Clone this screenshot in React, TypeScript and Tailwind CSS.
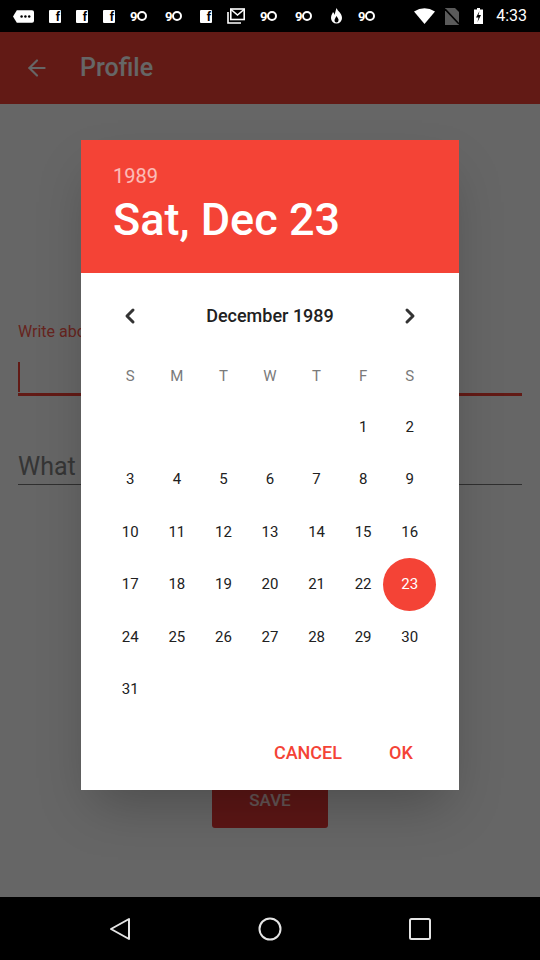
import React from "react";
import { ArrowLeft, ChevronLeft, ChevronRight } from "lucide-react";

const days: (number | null)[] = [
  null, null, null, null, null, 1, 2,
  3, 4, 5, 6, 7, 8, 9,
  10, 11, 12, 13, 14, 15, 16,
  17, 18, 19, 20, 21, 22, 23,
  24, 25, 26, 27, 28, 29, 30,
  31, null, null, null, null, null, null,
];

const weekDays = ["S", "M", "T", "W", "T", "F", "S"];

function FbIcon() {
  return (
    <div className="w-[12px] h-[13px] bg-white rounded-[1px] flex items-end justify-end pr-[1px] text-black text-[12px] font-bold leading-none">
      f
    </div>
  );
}

function NinetyIcon() {
  return (
    <div className="w-[20px] flex items-center text-white text-[13px] font-bold leading-none tracking-[-1px]">
      9<span className="ml-[1px] inline-block w-[10px] h-[10px] rounded-full border-[2px] border-white" />
    </div>
  );
}

function StatusBar() {
  return (
    <div className="h-[32px] bg-black flex items-center justify-between pl-[13px] pr-[13px]">
      <div className="flex items-center gap-[15px]">
        <svg width="21" height="13" viewBox="0 0 22 13">
          <path d="M4 0 H20 a2 2 0 0 1 2 2 V11 a2 2 0 0 1 -2 2 H4 L0 6.5 Z" fill="white" />
          <circle cx="9" cy="6.5" r="1.3" fill="black" />
          <circle cx="13" cy="6.5" r="1.3" fill="black" />
          <circle cx="17" cy="6.5" r="1.3" fill="black" />
        </svg>
        <FbIcon />
        <FbIcon />
        <FbIcon />
        <NinetyIcon />
        <NinetyIcon />
        <FbIcon />
        <svg width="18" height="16" viewBox="0 0 18 16" fill="none" stroke="white" strokeWidth="1.6">
          <path d="M1 4 V15 H14" />
          <rect x="3.8" y="1" width="13.4" height="10.5" />
          <path d="M4 1.5 L10.5 7 L17 1.5" />
        </svg>
        <NinetyIcon />
        <NinetyIcon />
        <svg width="13" height="16" viewBox="0 0 13 16">
          <path d="M6.5 0 C7.5 3 12 5 12 10 A5.5 5.5 0 0 1 1 10 C1 7 2.5 5.5 3 4 C4 5 4.5 6 4.8 7 C5 4 6 2 6.5 0Z" fill="white" />
          <path d="M6.5 8 C7.5 10 9 11 8.5 12.5 A2 2 0 0 1 4.5 12.5 C4.5 11 5.5 10 6.5 8Z" fill="black" />
        </svg>
        <NinetyIcon />
      </div>
      <div className="flex items-center">
        <svg width="21" height="16" viewBox="0 0 21 16">
          <path d="M0 3.5 Q10.5 -3 21 3.5 L10.5 16 Z" fill="white" />
        </svg>
        <svg className="ml-[10px]" width="14" height="17" viewBox="0 0 14 17">
          <path d="M0 0 H10 L14 4 V17 H0 Z" fill="#5a5a5a" />
          <path d="M0 1 L14 16" stroke="black" strokeWidth="1.6" />
        </svg>
        <svg className="ml-[15px]" width="9" height="16" viewBox="0 0 9 16">
          <path d="M3 0 H6 V1.5 H9 V16 H0 V1.5 H3 Z" fill="white" />
          <path d="M5.5 3 L2 9.5 H4.5 L3.5 14 L7 7 H4.5 Z" fill="black" />
        </svg>
        <span className="ml-[13px] text-white text-[16px] leading-none" style={{ fontFamily: "Roboto, sans-serif" }}>
          4:33
        </span>
      </div>
    </div>
  );
}

function NavBar() {
  return (
    <div className="h-[63px] bg-black flex items-center justify-center gap-[127px]">
      <svg width="22" height="24" viewBox="0 0 22 24" fill="none" stroke="#e5e5e5" strokeWidth="2" strokeLinejoin="round">
        <path d="M20 2 V22 L2 12 Z" />
      </svg>
      <svg width="24" height="24" viewBox="0 0 24 24" fill="none" stroke="#e5e5e5" strokeWidth="2">
        <circle cx="12" cy="12" r="10.5" />
      </svg>
      <svg width="22" height="22" viewBox="0 0 22 22" fill="none" stroke="#e5e5e5" strokeWidth="2">
        <rect x="1" y="1" width="20" height="20" rx="1.5" />
      </svg>
    </div>
  );
}

function DatePicker() {
  return (
    <div className="w-[378px] h-[650px] bg-white shadow-2xl flex flex-col">
      <div className="h-[133px] bg-[#f44336] pl-[32px] pt-[24px]">
        <div className="text-[20px] leading-[24px] text-white/65">1989</div>
        <div className="mt-[6px] text-[45px] leading-[52px] font-medium text-white">Sat, Dec 23</div>
      </div>
      <div className="flex-1 flex flex-col px-[26px] pt-[19px]">
        <div className="h-[48px] flex items-center justify-between">
          <div className="w-[46.5px] flex justify-center text-[#333]">
            <ChevronLeft size={24} strokeWidth={3} />
          </div>
          <div className="text-[18px] font-medium text-[#212121]">December 1989</div>
          <div className="w-[46.5px] flex justify-center text-[#333]">
            <ChevronRight size={24} strokeWidth={3} />
          </div>
        </div>
        <div className="mt-[19px] h-[36px] grid grid-cols-7 items-center text-center text-[15px] text-[#7a7a7a]">
          {weekDays.map((d, i) => (
            <div key={i}>{d}</div>
          ))}
        </div>
        <div className="mt-[6px] grid grid-cols-7">
          {days.map((d, i) => (
            <div key={i} className="h-[52.5px] flex items-center justify-center relative">
              {d === 23 && <div className="absolute w-[53px] h-[53px] rounded-full bg-[#f44336]" />}
              {d !== null && (
                <span className={d === 23 ? "relative text-[15px] text-white" : "text-[15px] text-[#212121]"}>{d}</span>
              )}
            </div>
          ))}
        </div>
        <div className="mt-[13px] h-[48px] flex items-center justify-end gap-[11px]">
          <button className="h-[40px] px-4 text-[18px] font-medium text-[#f44336]">CANCEL</button>
          <button className="h-[40px] min-w-[64px] px-4 text-[18px] font-medium text-[#f44336]">OK</button>
        </div>
      </div>
    </div>
  );
}

export default function App() {
  return (
    <div className="w-[540px] h-[960px] flex flex-col bg-white" style={{ fontFamily: "Roboto, 'Noto Sans', sans-serif" }}>
      <StatusBar />
      <div className="flex-1 relative flex flex-col">
        <div className="h-[72px] bg-[#f44336] flex items-center pl-[24px] text-white">
          <ArrowLeft size={26} />
          <span className="ml-[30px] text-[25px] font-medium">Profile</span>
        </div>
        <div className="flex-1 flex flex-col px-[18px]">
          <div className="mt-[216px] text-[16px] text-[#ff5a4e]">Write about yourself</div>
          <div className="mt-[17px] h-[35px] border-b-[3px] border-[#f44336] flex items-center">
            <div className="w-[2px] h-[30px] bg-[#f44336]" />
          </div>
          <div className="mt-[55px] pb-[1px] border-b border-[#757575] text-[25px] text-[#858585] leading-[32px]">
            What do you do?
          </div>
          <div className="mt-[283px] self-center w-[116px] h-[60px] bg-[#e53935] rounded-[3px] flex items-start justify-center pt-[20px] text-[17px] font-medium text-white/80">
            SAVE
          </div>
        </div>
        <div className="absolute inset-0 bg-black/60 flex items-center justify-center">
          <DatePicker />
        </div>
      </div>
      <NavBar />
    </div>
  );
}
